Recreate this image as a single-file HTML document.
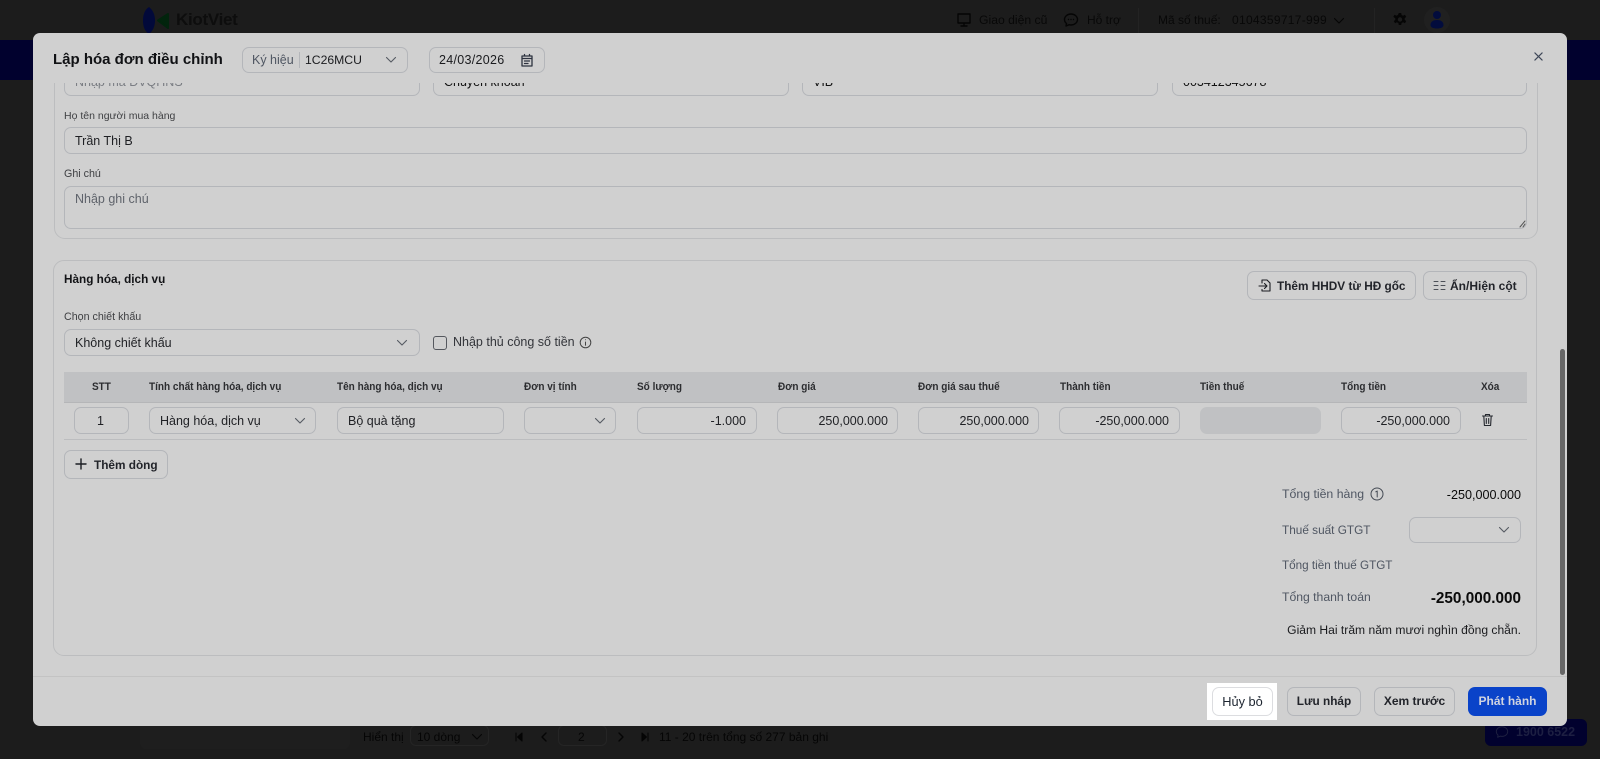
<!DOCTYPE html>
<html lang="vi"><head><meta charset="utf-8"><title>Lập hóa đơn điều chỉnh</title>
<style>
html,body{margin:0;padding:0;background:#1c1c1c}
#r{position:relative;width:1600px;height:759px;overflow:hidden;background:#1c1c1c;font-family:"Liberation Sans","Noto Sans CJK SC",sans-serif;color:#111}
#r div,#r span,#r svg{position:absolute;box-sizing:border-box}
.t{white-space:nowrap;transform:translateY(-50%);line-height:16px;font-size:12.5px}
.b{border:1px solid #b4b6ba;border-radius:7px}
.l{font-size:10.7px;color:#3f4043}
.h{font-size:11px;font-weight:700;color:#2c2d30;transform:translateY(-50%) scaleX(.91);transform-origin:left center}
.g{font-size:12.2px;color:#4f5662}
.n{text-align:right}
.d{color:#0a0a0a}
.btn{font-size:12px;font-weight:700;text-align:center;line-height:27px;color:#22242a}
svg{fill:none;stroke:#555a62;stroke-width:1.1;stroke-linecap:round;stroke-linejoin:round}
</style></head><body><div id="r">

<!-- background page -->
<div style="left:0;top:40px;width:1600px;height:40px;background:#01012e"></div>
<svg style="left:142px;top:7px" width="40" height="27" viewBox="0 0 40 27"><path d="M7 0C2 3 1 9 1 13.500S2 24 7 27C11 24 13 19 13 13.500S11 3 7 0Z" fill="#02093a" stroke="none"/><path d="M26 7 16 13.500 26 21Z" fill="#02240d" stroke="#02240d" stroke-width="2"/></svg>
<span class="t" style="left:176px;top:20px;font-size:17px;font-weight:700;color:#0d0d0d;letter-spacing:-.3px">KiotViet</span>
<svg style="left:956px;top:12px" width="16" height="16" viewBox="0 0 16 16"><path d="M2 2h12v9H2ZM5 14h6M8 11v3" stroke="#050505" stroke-width="1.400"/></svg>
<span class="t" style="left:979px;top:20px;font-size:12.200px;color:#080808">Giao diện cũ</span>
<svg style="left:1063px;top:12px" width="16" height="16" viewBox="0 0 16 16"><path d="M8 2c-3.600 0-6.500 2.500-6.500 5.500 0 1.600.8 3 2 4L3 14l3.200-1.300c.6.200 1.200.3 1.800.3 3.600 0 6.500-2.500 6.500-5.500S11.600 2 8 2Z" stroke="#050505" stroke-width="1.400"/><path d="M5.500 7.500h.01M8 7.500h.01M10.500 7.500h.01" stroke="#050505" stroke-width="1.400"/></svg>
<span class="t" style="left:1087px;top:20px;font-size:12px;color:#080808">Hỗ trợ</span>
<div style="left:1138px;top:8px;width:1px;height:25px;background:#232323"></div>
<span class="t" style="left:1158px;top:20px;font-size:12px;color:#080808">Mã số thuế:</span>
<span class="t" style="left:1232px;top:20px;font-size:12px;color:#080808;letter-spacing:.3px">0104359717-999</span>
<svg style="left:1333px;top:15px" width="12" height="12" viewBox="0 0 12 12"><path d="M1.500 3.500 6 8l4.500-4.500" stroke="#050505"/></svg>
<div style="left:1374px;top:8px;width:1px;height:25px;background:#232323"></div>
<svg style="left:1392px;top:12px" width="16" height="16" viewBox="0 0 16 16"><path d="M6.800 1h2.400l.4 2 1.500.7 1.800-1 1.300 2.200-1.500 1.300v1.600l1.500 1.300-1.300 2.200-1.800-1-1.500.7-.4 2H6.800l-.4-2-1.500-.7-1.800 1-1.300-2.200 1.500-1.300V6.200L1.300 4.900l1.300-2.200 1.800 1 1.500-.7Z" fill="#050505" stroke="none"/><circle cx="8" cy="7.500" r="2.200" fill="#1c1c1c" stroke="none"/></svg>
<div style="left:1424px;top:7px;width:26px;height:26px;border-radius:50%;background:#202020"></div>
<svg style="left:1427px;top:9px" width="20" height="21" viewBox="0 0 20 21"><circle cx="10" cy="6" r="4" fill="#020c3d" stroke="none"/><path d="M3.500 16c0-3.500 3-5 6.500-5s6.500 1.500 6.500 5c0 2.500-3 3.500-6.500 3.500S3.500 18.500 3.500 16Z" fill="#020c3d" stroke="none"/></svg>

<div style="left:140px;top:726px;width:210px;height:23px;background:#1e1e1e;border-radius:0 0 6px 6px"></div>
<span class="t" style="left:363px;top:737px;font-size:12px;color:#050505">Hiển thị</span>
<div style="left:410px;top:725px;width:79px;height:21px;border:1px solid #252525;border-radius:6px"></div>
<span class="t" style="left:417px;top:737px;font-size:12px;color:#050505">10 dòng</span>
<svg style="left:471px;top:731px" width="12" height="12" viewBox="0 0 12 12"><path d="M1.500 3.500 6 8l4.500-4.500" stroke="#050505"/></svg>
<svg style="left:514px;top:731px" width="10" height="12" viewBox="0 0 10 12"><path d="M2 2v8M8 2 3.500 6 8 10Z" stroke="#050505" fill="#050505"/></svg>
<svg style="left:539px;top:731px" width="10" height="12" viewBox="0 0 10 12"><path d="M7 2 3 6l4 4" stroke="#050505" stroke-width="1.400"/></svg>
<div style="left:558px;top:725px;width:49px;height:21px;border:1px solid #252525;border-radius:6px"></div>
<span class="t" style="left:578px;top:737px;font-size:12px;color:#050505">2</span>
<svg style="left:616px;top:731px" width="10" height="12" viewBox="0 0 10 12"><path d="m3 2 4 4-4 4" stroke="#050505" stroke-width="1.400"/></svg>
<svg style="left:640px;top:731px" width="10" height="12" viewBox="0 0 10 12"><path d="M8 2v8M2 2l4.500 4L2 10Z" stroke="#050505" fill="#050505"/></svg>
<span class="t" style="left:659px;top:737px;font-size:12px;color:#050505">11 - 20 trên tổng số 277 bản ghi</span>
<div style="left:1485px;top:719px;width:102px;height:27px;background:#01012e;border-radius:6px"></div>
<svg style="left:1495px;top:725px" width="14" height="14" viewBox="0 0 16 16"><path d="M8 2c-3.600 0-6.500 2.500-6.500 5.500 0 1.600.8 3 2 4L3 14l3.200-1.300c.6.200 1.200.3 1.800.3 3.600 0 6.500-2.500 6.500-5.500S11.600 2 8 2Z" stroke="#1e2040"/></svg>
<span class="t" style="left:1516px;top:732px;font-size:12.500px;font-weight:700;color:#1d1f42">1900 6522</span>

<!-- modal -->
<div style="left:33px;top:33px;width:1534px;height:693px;background:#d0d0d0;border-radius:7px;overflow:hidden"></div>

<span class="t" style="left:53px;top:60px;font-size:15px;font-weight:700;color:#101114">Lập hóa đơn điều chỉnh</span>
<div class="b" style="left:242px;top:47px;width:166px;height:26px"></div>
<span class="t" style="left:252px;top:60px;color:#4f5662">Ký hiệu</span>
<div style="left:299px;top:52px;width:1px;height:16px;background:#b4b6ba"></div>
<span class="t" style="left:305px;top:60px;color:#1a1b1e;font-size:12.200px">1C26MCU</span>
<svg style="left:385px;top:54px" width="12" height="12" viewBox="0 0 12 12"><path d="M1.500 3.500 6 8l4.500-4.500"/></svg>
<div class="b" style="left:429px;top:47px;width:116px;height:26px"></div>
<span class="t" style="left:439px;top:60px;color:#1a1b1e;letter-spacing:.3px">24/03/2026</span>
<svg style="left:520px;top:53px" width="14" height="14" viewBox="0 0 14 14"><path d="M2 3h10v10H2ZM2 5.500h10M4.500 1.500V3M9.500 1.500V3M4.500 8h5M4.500 10.500h3.500" stroke="#2e3340" stroke-width="1.300"/></svg>
<svg style="left:1534px;top:52px" width="9" height="9" viewBox="0 0 10 10"><path d="m1 1 8 8M9 1 1 9" stroke="#3d4657" stroke-width="1.300"/></svg>

<!-- scrolled content -->
<div style="left:33px;top:83px;width:1534px;height:593px;overflow:hidden">
  <div style="left:21px;top:-90px;width:1484px;height:246px;border:1px solid #bcbdbf;border-radius:11px"></div>
  <div class="b" style="left:31px;top:-14px;width:356px;height:27px"></div>
  <span class="t" style="left:42px;top:-1px;color:#7a7d83">Nhập mã ĐVQHNS</span>
  <div class="b" style="left:400px;top:-14px;width:356px;height:27px"></div>
  <span class="t" style="left:411px;top:-1px">Chuyển khoản</span>
  <div class="b" style="left:769px;top:-14px;width:356px;height:27px"></div>
  <span class="t" style="left:780px;top:-1px">VIB</span>
  <div class="b" style="left:1139px;top:-14px;width:355px;height:27px"></div>
  <span class="t" style="left:1150px;top:-1px">003412345678</span>
</div>

<span class="t l" style="left:64px;top:116px;font-size:10.500px">Họ tên người mua hàng</span>
<div class="b" style="left:64px;top:127px;width:1463px;height:27px"></div>
<span class="t" style="left:75px;top:141px;color:#1f2024">Trần Thị B</span>
<span class="t l" style="left:64px;top:174px">Ghi chú</span>
<div class="b" style="left:64px;top:186px;width:1463px;height:43px"></div>
<span class="t" style="left:75px;top:199px;color:#5f636b">Nhập ghi chú</span>
<svg style="left:1519px;top:220px" width="7" height="8" viewBox="0 0 7 8"><path d="M1 7 6 1M4 7l2-3" stroke="#555" stroke-width="1"/></svg>

<!-- goods card -->
<div style="left:53px;top:260px;width:1484px;height:396px;border:1px solid #bcbdbf;border-radius:11px"></div>
<span class="t" style="left:64px;top:278.500px;font-size:12px;font-weight:700;color:#131417;transform:translateY(-50%) scaleX(.98);transform-origin:left center">Hàng hóa, dịch vụ</span>

<div class="b" style="left:1247px;top:271px;width:169px;height:29px"></div>
<svg style="left:1258px;top:278px" width="15" height="15" viewBox="0 0 15 15"><path d="M1 8h8M6.500 5.500 9 8l-2.500 2.500M4 5V2h5l3 3v8H4v-1.500" stroke="#1b1d22" stroke-width="1.100"/></svg>
<span class="t" style="left:1277px;top:286px;font-size:11.800px;font-weight:700;color:#22242a">Thêm HHDV từ HĐ gốc</span>
<div class="b" style="left:1423px;top:271px;width:104px;height:29px"></div>
<svg style="left:1433px;top:279px" width="13" height="13" viewBox="0 0 13 13"><path d="M1 2.500h4M8 2.500h4M1 6.500h4M8 6.500h4M1 10.500h4M8 10.500h4" stroke="#4c5058" stroke-width="1"/></svg>
<span class="t" style="left:1450px;top:286px;font-size:12px;font-weight:700;color:#22242a">Ẩn/Hiện cột</span>

<span class="t l" style="left:64px;top:317px">Chọn chiết khấu</span>
<div class="b" style="left:64px;top:329px;width:356px;height:27px"></div>
<span class="t" style="left:75px;top:343px;color:#1f2024">Không chiết khấu</span>
<svg style="left:396px;top:337px" width="12" height="12" viewBox="0 0 12 12"><path d="M1.500 3.500 6 8l4.500-4.500"/></svg>
<div style="left:433px;top:336px;width:14px;height:14px;border:1px solid #55585e;border-radius:3px"></div>
<span class="t" style="left:453px;top:342px;color:#33353a;font-size:12.500px">Nhập thủ công số tiền</span>
<svg style="left:579px;top:336px" width="13" height="13" viewBox="0 0 13 13"><circle cx="6.500" cy="6.500" r="5.300" stroke-width="1" stroke="#444"/><path d="M6.500 6v3.200M6.500 3.800h.01" stroke-width="1" stroke="#444"/></svg>

<!-- table -->
<div style="left:64px;top:372px;width:1463px;height:31px;background:#c0c1c3;border-bottom:1px solid #b5b6b8"></div>
<span class="t h" style="left:92px;top:387px">STT</span>
<span class="t h" style="left:149px;top:387px">Tính chất hàng hóa, dịch vụ</span>
<span class="t h" style="left:337px;top:387px">Tên hàng hóa, dịch vụ</span>
<span class="t h" style="left:524px;top:387px">Đơn vị tính</span>
<span class="t h" style="left:637px;top:387px">Số lượng</span>
<span class="t h" style="left:778px;top:387px">Đơn giá</span>
<span class="t h" style="left:918px;top:387px">Đơn giá sau thuế</span>
<span class="t h" style="left:1060px;top:387px">Thành tiền</span>
<span class="t h" style="left:1200px;top:387px">Tiền thuế</span>
<span class="t h" style="left:1341px;top:387px">Tổng tiền</span>
<span class="t h" style="left:1481px;top:387px">Xóa</span>

<div class="b" style="left:74px;top:407px;width:55px;height:27px"></div>
<span class="t" style="left:97px;top:421px;color:#1f2024">1</span>
<div class="b" style="left:149px;top:407px;width:167px;height:27px"></div>
<span class="t" style="left:160px;top:421px;color:#1f2024">Hàng hóa, dịch vụ</span>
<svg style="left:294px;top:415px" width="12" height="12" viewBox="0 0 12 12"><path d="M1.500 3.500 6 8l4.500-4.500"/></svg>
<div class="b" style="left:337px;top:407px;width:167px;height:27px"></div>
<span class="t" style="left:348px;top:421px;color:#1f2024">Bộ quà tặng</span>
<div class="b" style="left:524px;top:407px;width:92px;height:27px"></div>
<svg style="left:594px;top:415px" width="12" height="12" viewBox="0 0 12 12"><path d="M1.500 3.500 6 8l4.500-4.500"/></svg>
<div class="b" style="left:637px;top:407px;width:120px;height:27px"></div>
<span class="t n" style="right:854px;top:421px;color:#1f2024">-1.000</span>
<div class="b" style="left:777px;top:407px;width:121px;height:27px"></div>
<span class="t n" style="right:712px;top:421px;color:#1f2024">250,000.000</span>
<div class="b" style="left:918px;top:407px;width:121px;height:27px"></div>
<span class="t n" style="right:571px;top:421px;color:#1f2024">250,000.000</span>
<div class="b" style="left:1059px;top:407px;width:121px;height:27px"></div>
<span class="t n" style="right:431px;top:421px;color:#1f2024">-250,000.000</span>
<div style="left:1200px;top:407px;width:121px;height:27px;background:#c0c1c3;border-radius:7px"></div>
<div class="b" style="left:1341px;top:407px;width:120px;height:27px"></div>
<span class="t n" style="right:150px;top:421px;color:#1f2024">-250,000.000</span>
<svg style="left:1481px;top:413px" width="13" height="14" viewBox="0 0 13 14"><path d="M1.500 3h10M4.500 3V1.500h4V3M2.800 3l.6 9.500h6.200l.6-9.500M5.300 5.500v5M7.700 5.500v5" stroke="#24272e" stroke-width="1.100"/></svg>
<div style="left:64px;top:439px;width:1463px;height:1px;background:#bcbdbf"></div>

<div class="b" style="left:64px;top:450px;width:104px;height:29px"></div>
<svg style="left:75px;top:458px" width="12" height="12" viewBox="0 0 12 12"><path d="M6 1v10M1 6h10" stroke="#1b1d22" stroke-width="1.400"/></svg>
<span class="t" style="left:94px;top:465px;font-size:11.800px;font-weight:700;color:#22242a">Thêm dòng</span>

<!-- totals -->
<span class="t g" style="left:1282px;top:494px;font-size:12.300px">Tổng tiền hàng</span>
<svg style="left:1370px;top:487px" width="14" height="14" viewBox="0 0 14 14"><circle cx="7" cy="7" r="6" stroke="#444a54" stroke-width="1"/><path d="M5.800 4.800 7.200 4v6" stroke="#444a54" stroke-width="1"/></svg>
<span class="t n d" style="right:79px;top:495px;font-size:12.600px">-250,000.000</span>
<span class="t g" style="left:1282px;top:530px;font-size:11.800px">Thuế suất GTGT</span>
<div class="b" style="left:1409px;top:517px;width:112px;height:26px"></div>
<svg style="left:1498px;top:524px" width="12" height="12" viewBox="0 0 12 12"><path d="M1.500 3.500 6 8l4.500-4.500"/></svg>
<span class="t g" style="left:1282px;top:566px;font-size:11.700px">Tổng tiền thuế GTGT</span>
<span class="t g" style="left:1282px;top:597px">Tổng thanh toán</span>
<span class="t n d" style="right:79px;top:598.500px;font-size:15.300px;font-weight:700">-250,000.000</span>
<span class="t n d" style="right:79px;top:630px;color:#1a1b1e;font-size:12.100px">Giảm Hai trăm năm mươi nghìn đồng chẵn.</span>

<!-- scrollbar & footer -->
<div style="left:1560px;top:349px;width:5px;height:326px;background:#666;border-radius:3px"></div>
<div style="left:33px;top:676px;width:1534px;height:1px;background:#c3c3c3"></div>
<div style="left:1207px;top:683px;width:70px;height:37px;background:#fff"></div>
<div class="btn" style="left:1212px;top:687px;width:61px;height:29px;border:1px solid #dcdde0;border-radius:7px;background:#fff;color:#1d2530;font-weight:400;font-size:12.800px">Hủy bỏ</div>
<div class="b btn" style="left:1287px;top:687px;width:74px;height:29px;font-size:11.800px">Lưu nháp</div>
<div class="b btn" style="left:1374px;top:687px;width:81px;height:29px">Xem trước</div>
<div class="btn" style="left:1468px;top:687px;width:79px;height:29px;line-height:29px;background:#0a43c9;border-radius:7px;color:#d0d4e0">Phát hành</div>
</div></body></html>
